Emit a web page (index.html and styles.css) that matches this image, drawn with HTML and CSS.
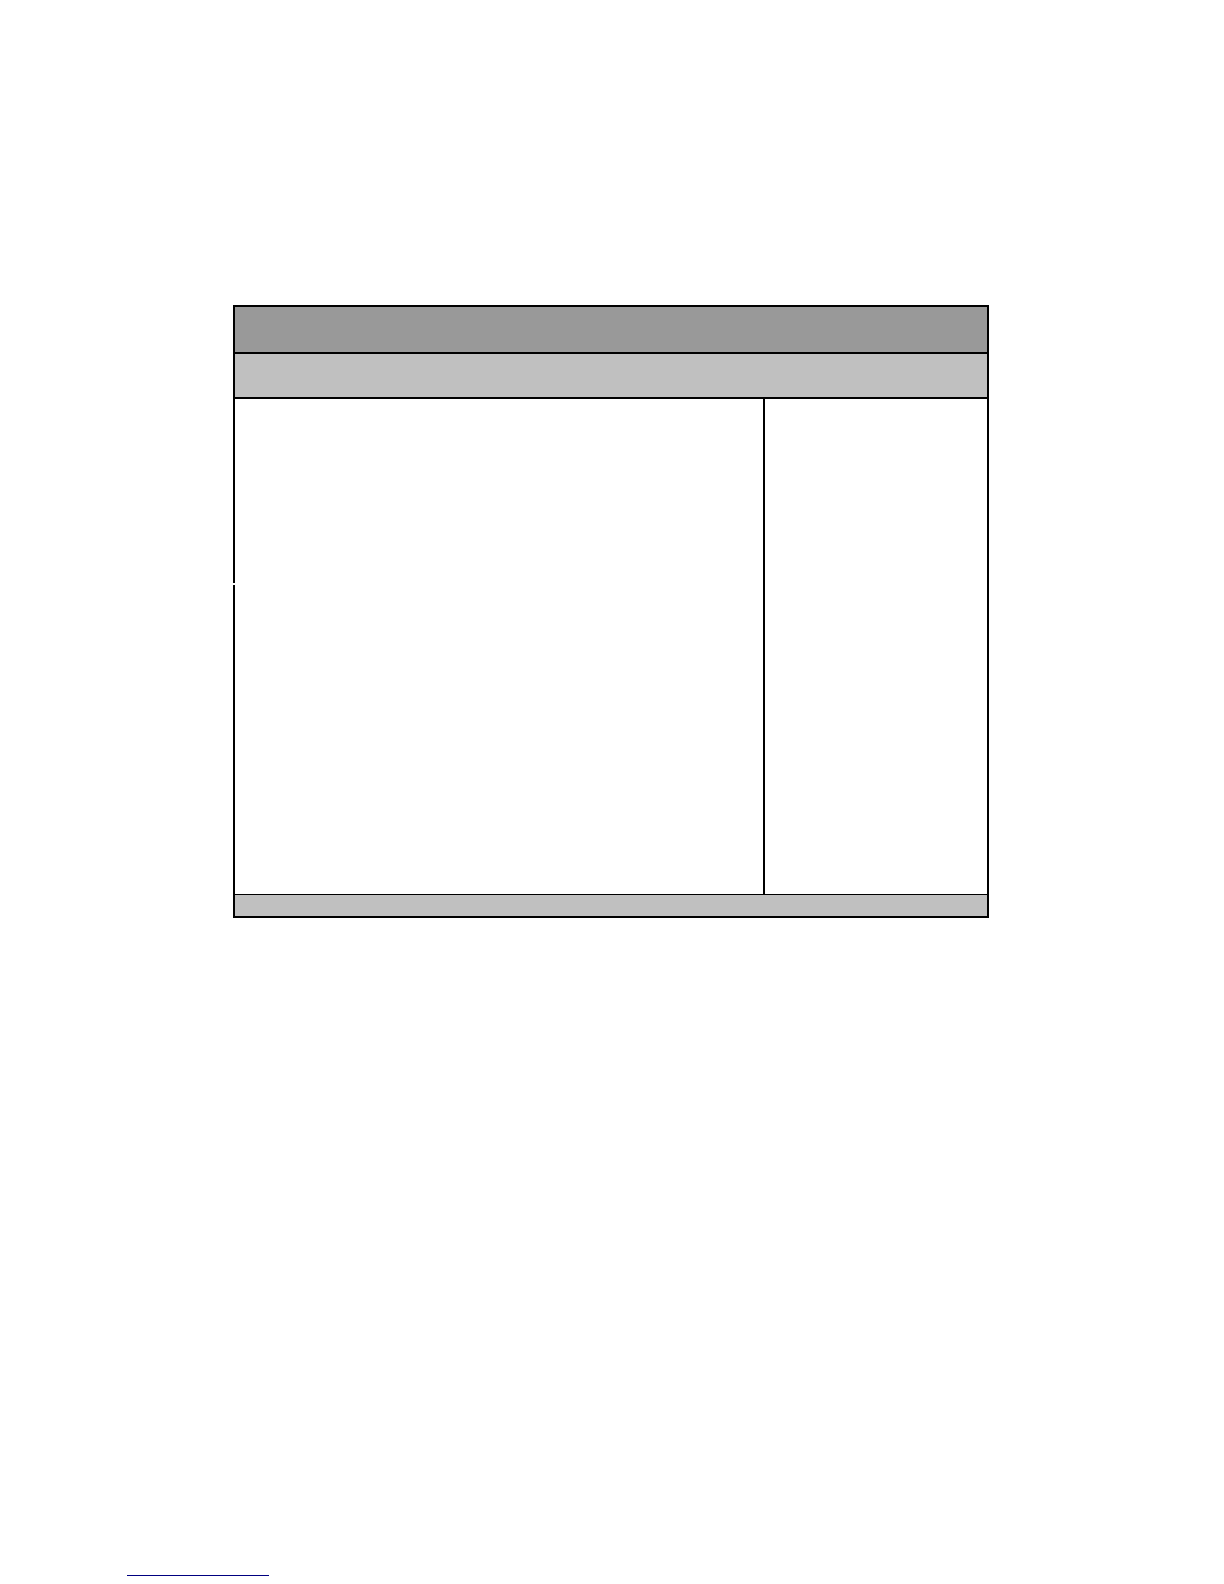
FILE: index.html
```html
<!DOCTYPE html>
<html lang="en">
<head>
<meta charset="utf-8">
<meta name="viewport" content="width=device-width, initial-scale=1">
<link rel="stylesheet" href="styles.css">
</head>
<body>
<main class="frame">
  <header class="title-bar"></header>
  <nav class="menu-bar"></nav>
  <div class="content">
    <section class="panel"></section>
    <aside class="help"></aside>
  </div>
  <footer class="status-bar"></footer>
</main>
<hr class="page-rule">
</body>
</html>
```
FILE: styles.css
```css
* {
  box-sizing: border-box;
}

body {
  display: flex;
  flex-direction: column;
  justify-content: space-between;
  min-height: 100vh;
  margin: 0;
  padding: 305px 235px 8px 233px;
  background: #fff;
}

.frame {
  border: 2px solid #000;
}

.title-bar {
  height: 47px;
  background: #999;
  border-bottom: 2px solid #000;
}

.menu-bar {
  height: 45px;
  background: #c0c0c0;
  border-bottom: 2px solid #000;
}

.content {
  position: relative;
  display: grid;
  grid-template-columns: 1fr 224px;
  min-height: 495px;
}

/* small break in the left edge of the frame */
.content::before {
  content: "";
  position: absolute;
  top: 184px;
  left: -2px;
  width: 2px;
  height: 2px;
  background: #fff;
}

.help {
  border-left: 2px solid #000;
}

.status-bar {
  height: 22px;
  background: #c0c0c0;
  border-top: 1px solid #000;
}

.page-rule {
  width: 142px;
  height: 1px;
  margin: 0 0 0 -106px;
  border: 0;
  background: #000080;
}
```
